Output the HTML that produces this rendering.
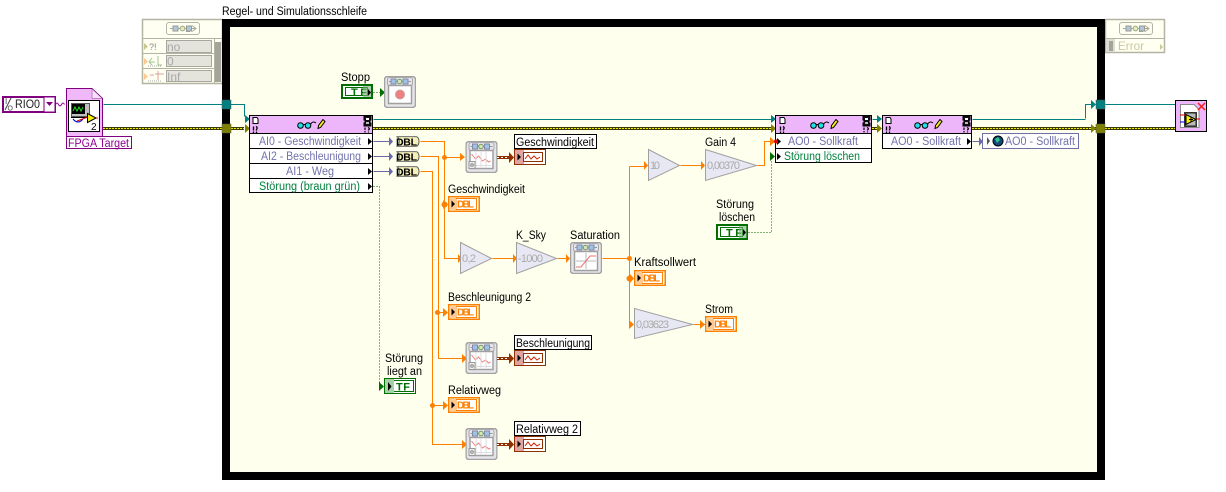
<!DOCTYPE html>
<html><head><meta charset="utf-8"><title>Regel- und Simulationsschleife</title>
<style>
html,body{margin:0;padding:0;background:#fff;width:1226px;height:492px;overflow:hidden}
svg{display:block}
text{font-family:"Liberation Sans",sans-serif;font-size:11.5px;fill:#000;white-space:pre}
.n{fill:#7272ac}.g{fill:#00803c}.gr{fill:#aaa;font-size:11px}.p{fill:#900090}
.d{font-weight:bold;font-size:10px;fill:#ff8000}
.c{font-weight:bold;font-size:10.500px;fill:#000}
.w{fill:none;shape-rendering:crispEdges}
.or{stroke:#ff8000}.te{stroke:#008080}.bl{stroke:#6a6aa6}.gn{stroke:#006800;stroke-dasharray:1 2}
</style></head><body>
<svg width="1226" height="492" viewBox="0 0 1226 492" xmlns="http://www.w3.org/2000/svg">
<defs>
<symbol id="hdr" viewBox="0 0 34 13" overflow="visible">
<rect x=".5" y=".5" width="33" height="12" rx="2.500" fill="none" stroke="#b4b4a4"/>
<path d="M4 6.500H30M26 3.500L30 6.500 26 9.500M20 9.500H24" stroke="#a8a898" fill="none"/>
<rect x="7" y="4" width="5" height="5" fill="#b0c8dc" stroke="#9a9a90"/>
<circle cx="16.500" cy="6.500" r="2.400" fill="#e0ecc8" stroke="#a0a880"/>
<rect x="20.500" y="4" width="5" height="5" fill="#b0c8dc" stroke="#9a9a90"/>
</symbol>
<symbol id="top" viewBox="0 0 32 10" overflow="visible">
<rect x="3.500" y=".5" width="25" height="8" rx="2" fill="none" stroke="#a8a8a8"/>
<path d="M5 4.500H27" stroke="#999" fill="none"/>
<rect x="7" y="2" width="5" height="5" fill="#9cc4e4" stroke="#88a"/>
<circle cx="15.500" cy="4.500" r="2.300" fill="#cfe8b8" stroke="#7a9a60"/>
<rect x="19" y="2" width="5" height="5" fill="#9cc4e4" stroke="#88a"/>
</symbol>
<symbol id="graph" viewBox="0 0 32 32">
<rect x=".5" y=".5" width="31" height="31" rx="3" fill="#e6e6ea" stroke="#a2a2a2" stroke-width="1.500"/>
<use href="#top" width="32" height="10" y="1"/>
<rect x="4.500" y="9.500" width="23" height="18" fill="#fff" stroke="#a0a0a0" stroke-width="1.500"/>
<path d="M6 13l4 5 3-3 4 5 3-2 3 3 2-1" fill="none" stroke="#f08080"/>
<path d="M6 24.500H26M10.500 10V26M15.500 10V26M20.500 10V26" stroke="#ddd" fill="none"/>
<rect x="3.500" y="20.500" width="6" height="7" fill="#eee" stroke="#999"/>
<circle cx="6.500" cy="24" r="1.300" fill="none" stroke="#888"/>
</symbol>
<symbol id="sat" viewBox="0 0 32 32">
<rect x=".5" y=".5" width="31" height="31" rx="3" fill="#e6e6ea" stroke="#a2a2a2" stroke-width="1.500"/>
<use href="#top" width="32" height="10" y="1"/>
<rect x="4.500" y="9.500" width="23" height="19" fill="#fff" stroke="#a0a0a0" stroke-width="1.500"/>
<path d="M6 19H26M16 11V27" stroke="#bbb" fill="none"/>
<path d="M6 25H11L20 14H26" stroke="#f07070" fill="none"/>
</symbol>
<symbol id="stop" viewBox="0 0 32 32">
<rect x=".5" y=".5" width="31" height="31" rx="3" fill="#e6e6ea" stroke="#a2a2a2" stroke-width="1.500"/>
<use href="#top" width="32" height="10" y="1"/>
<rect x="4.500" y="9.500" width="23" height="18" fill="#fff" stroke="#a0a0a0" stroke-width="1.500"/>
<circle cx="16" cy="18.500" r="4.500" fill="#f08080" stroke="#c8a0a0"/>
</symbol>
<symbol id="wave" viewBox="0 0 32 16">
<rect x=".5" y=".5" width="31" height="15" fill="#fff" stroke="#8e3000"/>
<rect x="1" y="1" width="9" height="14" fill="#e0a4a0"/>
<rect x="9.500" y="3.500" width="19" height="9" fill="#fff" stroke="#8e3000"/>
<path d="M3.500 4.500L7 8 3.500 11.500Z" fill="#000"/>
<path d="M11 10L14 6 17 10 20 7 23 10 26 8" fill="none" stroke="#d02000"/>
</symbol>
<symbol id="dbli" viewBox="0 0 32 16">
<rect x=".75" y=".75" width="30.500" height="14.500" fill="#fffff0" stroke="#ff8000" stroke-width="1.500"/>
<rect x="2" y="2" width="8" height="12" fill="#ffd0a0"/>
<rect x="8.500" y="2.500" width="20" height="11" fill="#fff" stroke="#ff8000"/>
<rect x="3" y="3" width="6" height="10" fill="#ffc890"/>
<path d="M3.500 4.500L7 8 3.500 11.500Z" fill="#000"/>
</symbol>
<symbol id="dblc" viewBox="0 0 28 11">
<path d="M3.500.5H24a3 5 0 0 1 0 10H3.500a3 5 0 0 0 0-10Z" fill="#f4eeb8" stroke="#555" stroke-width="1"/>
</symbol>
<symbol id="node" viewBox="0 0 14 18">
<path d="M2 1.500H6L7 3V7.500H2Z" fill="#fff" stroke="#000"/>
<path d="M2.500 10.500V14.500M2.500 15.500V17M5 10.500Q7 11.500 5.500 13.500V14.500M5.500 15.500V17" stroke="#000" fill="none" stroke-width="1.300"/>
</symbol>
<symbol id="glass" viewBox="0 0 30 14">
<circle cx="4.500" cy="6.500" r="2.800" fill="#20e0e8" stroke="#000"/>
<circle cx="12" cy="6.500" r="2.800" fill="#20e0e8" stroke="#000"/>
<path d="M7 5.500H9.500M14.500 5.500C16 2.500 18 2.500 20 4" fill="none" stroke="#000"/>
<path d="M22 9.500L22.500 6.500 27 .5 29 2.500 24.500 8.500Z" fill="#f8f020" stroke="#000"/>
</symbol>
<symbol id="err" viewBox="0 0 9 18">
<path d="M1 1H8V5H7V8H8V11H1V8H2V5H1Z" fill="#111" stroke="#000"/>
<rect x="3" y="3" width="3" height="2" fill="#fff"/><rect x="3" y="7" width="3" height="2" fill="#bbb"/>
<path d="M2 12.500V15M2 16V17.500M5 12.500Q7.500 13.500 5.500 15V15.500M5.500 16.500V17.500" stroke="#000" stroke-width="1.200" fill="none"/>
</symbol>
</defs>

<text x="222" y="15" textLength="145" lengthAdjust="spacingAndGlyphs">Regel- und Simulationsschleife</text>

<!-- left shift register -->
<rect x="142.500" y="19.500" width="80" height="64" fill="#fffff2" stroke="#b4b4a4" stroke-width="1.500"/>
<path d="M143 38.500H222M143 53.500H215M143 68.500H215M214.500 38V84" stroke="#b4b4a4" class="w"/>
<use href="#hdr" x="166" y="22" width="34" height="13"/>
<rect x="166.500" y="40.500" width="45" height="12" fill="#e4e4dc" stroke="#a8a8a0"/>
<rect x="166.500" y="55.500" width="45" height="11" fill="#e4e4dc" stroke="#a8a8a0"/>
<rect x="166.500" y="70.500" width="45" height="11" fill="#e4e4dc" stroke="#a8a8a0"/>
<rect x="215" y="42" width="6" height="40" fill="#a4a498"/>
<path d="M144 43L148 46.500 144 50Z" fill="#c8c890"/><path d="M144 58L148 61.500 144 65Z" fill="#ffc890"/><path d="M144 73L148 76.500 144 80Z" fill="#ffc890"/>
<text x="149" y="50" style="font-size:9px;fill:#888">?!</text>
<path d="M150 62H155M152 58L149 62 152 65M158 56V65H162" fill="none" stroke="#a0c898"/>
<path d="M150 75H154M158 71V80M155 74H164" fill="none" stroke="#d8a0a0"/>
<path d="M148 66H162M148 81H162" stroke="#aaa" stroke-dasharray="1 1"/>
<text x="167" y="51" style="font-size:12px;fill:#a8a8a8">no</text>
<text x="167" y="65.500" style="font-size:12px;fill:#a8a8a8">0</text>
<text x="167" y="81" style="font-size:12px;fill:#a8a8a8">Inf</text>

<!-- right shift register -->
<rect x="1105.500" y="19.500" width="59" height="33" fill="#fffff2" stroke="#b4b4a4" stroke-width="1.500"/>
<path d="M1106 38.500H1165" stroke="#b4b4a4" class="w"/>
<use href="#hdr" x="1119" y="22" width="34" height="13"/>
<rect x="1106" y="39" width="9" height="13" fill="#dcdcd0"/><rect x="1109" y="41" width="4" height="10" fill="#a4a498"/>
<text x="1118" y="50" textLength="26" lengthAdjust="spacingAndGlyphs" style="fill:#c8c8a0">Error</text>
<path d="M1160 44L1163 47 1160 50Z" fill="#c8c890"/>

<!-- loop -->
<rect x="226" y="23" width="875" height="453" fill="#ffffee" stroke="#000" stroke-width="8" shape-rendering="crispEdges"/>

<!-- outer wires -->
<g transform="translate(.5 .5)">
<path class="w te" d="M103 104H244V116M1085 118V104H1093M972 119H1085M1105 104H1175M373 119H772M872 119H878"/>
<path class="w bl" d="M373 141H390M373 156H390M373 171H390M972 141H980"/>
<path class="w or" d="M420 141H444V258H458M420 156H438V358H463M420 171H432V444H463M444 157H462M444 204H445M437 312H445M432 405H445"/>
<path class="w or" d="M492 258H513M557 258H567M602 258H629M629 166V324H631M629 166H645M680 165H702M757 165H764V141H771M693 324H705"/>
<path class="w or" d="M630 278H632"/>
<path class="w gn" d="M373 92H381M373 186H379V386H381M748 232H771V160"/>
<path d="M55 104q1.500-3 3 0t3 0 3 0" fill="none" stroke="#900090"/>
</g>
<g class="w">
<path d="M103 128.500H222M231 128.500H244M373 128.500H772M872 128.500H878M972 128.500H1096M1105 128.500H1175" stroke="#3a3a00" stroke-width="3"/>
<path d="M103 128.500H222M231 128.500H244M373 128.500H772M872 128.500H878M972 128.500H1096M1105 128.500H1175" stroke="#f4f000" stroke-width="1" stroke-dasharray="2 1"/>
</g>
<!-- tunnels -->
<rect x="222" y="100" width="9" height="9" fill="#008080" stroke="#555" stroke-width=".5"/>
<rect x="222" y="124" width="9" height="9" fill="#808000" stroke="#555" stroke-width=".5"/>
<rect x="1096" y="100" width="9" height="9" fill="#008080" stroke="#555" stroke-width=".5"/>
<rect x="1096" y="124" width="9" height="9" fill="#808000" stroke="#555" stroke-width=".5"/>

<!-- arrows -->
<g fill="#ff8000">
<path d="M458 254l4 4.500-4 4.500zM513 254l4 4.500-4 4.500zM566 254l4 4.500-4 4.500zM460 153l5 4-5 4zM462 354l5 4.500-5 4.500zM462 440l5 4.500-5 4.500zM644 161l4 4.500-4 4.500zM701 161l4 4.500-4 4.500zM770 137l5 4.500-5 4.500zM629 320l5 4.500-5 4.500zM443 200l5 4.500-5 4.500zM443 308l5 4.500-5 4.500zM443 401l5 4.500-5 4.500zM630 274l4 4.500-4 4.500zM700 320l5 4.500-5 4.500z"/>
<circle cx="444.500" cy="157.500" r="2.500"/><circle cx="444.500" cy="204.500" r="3"/><circle cx="437.500" cy="312.500" r="2.500"/><circle cx="432.500" cy="405.500" r="2.500"/><circle cx="629.500" cy="258.500" r="2.500"/><circle cx="629.500" cy="278.500" r="3"/>
</g>
<g fill="#006f00"><path d="M380 88l5 4.500-5 4.500zM379 382l5 4.500-5 4.500zM770 152l5 4.500-5 4.500z"/></g>
<g fill="#008080"><path d="M245 115l5 4-5 4zM771 115l5 4-5 4zM877 115l5 4-5 4zM1091 100l5 4.500-5 4.500z"/></g>
<g fill="#808000"><path d="M245 124l5 4.500-5 4.500zM771 124l5 4.500-5 4.500zM877 124l5 4.500-5 4.500zM1091 124l5 4.500-5 4.500z"/></g>
<g fill="#6a6aa6"><path d="M389 137l4 4.500-4 4.500zM389 152l4 4.500-4 4.500zM389 167l4 4.500-4 4.500zM979 137l4 4.500-4 4.500z"/></g>

<!-- RIO0 -->
<rect x="3" y="97" width="52" height="15" fill="#fff" stroke="#800080" stroke-width="2"/>
<rect x="44" y="97" width="11" height="15" fill="#fff" stroke="#800080" stroke-width="1"/>
<path d="M46 102H53L49.500 106Z" fill="#800080"/>
<text x="5" y="104" style="font-size:8px;fill:#444">I</text><path d="M5 110L11 98" stroke="#444" fill="none"/><text x="7.500" y="110.500" style="font-size:7px;fill:#444">O</text>
<text x="15" y="108" textLength="25" lengthAdjust="spacingAndGlyphs" style="font-size:12px;fill:#222">RIO0</text>

<!-- FPGA -->
<path d="M66.500 88.500H92L102.500 98.500V136.500H66.500Z" fill="#f0b8f8" stroke="#800080"/>
<path d="M92 89V98.500H102" fill="#f8e0fc" stroke="#c080c0"/>
<rect x="68.500" y="100.500" width="31" height="31" fill="#fff" stroke="#000"/>
<rect x="71.500" y="103.500" width="18" height="13" fill="#c0c0c0" stroke="#555"/>
<rect x="72" y="104" width="13" height="10" fill="#000"/>
<path d="M73 111l2-4 2 4 2-4 2 4 2-4" stroke="#20e020" fill="none"/>
<path d="M71 117.500H88" stroke="#000"/>
<path d="M73 119q5 6 10 0" stroke="#0000c0" fill="none"/><path d="M77 121L88 117" stroke="#e00000"/>
<path d="M87.500 113.500L96 118 87.500 122.500Z" fill="#f8f000" stroke="#000"/>
<path d="M96 118H98" stroke="#e00000"/>
<text x="91" y="130" style="font-size:10px">2</text>
<rect x="66.500" y="136.500" width="65" height="12" fill="#fff" stroke="#800080"/>
<text x="68" y="147" textLength="61" lengthAdjust="spacingAndGlyphs" class="p">FPGA Target</text>

<!-- Node 1 -->
<rect x="249.500" y="115.500" width="123" height="77" fill="#fff" stroke="#000"/>
<rect x="250" y="116" width="122" height="17" fill="#edb6fa"/>
<path d="M250 133.500H373M250 148.500H373M250 163.500H373M250 178.500H373" stroke="#000" class="w"/>
<use href="#node" x="251" y="116" width="14" height="18"/>
<use href="#glass" x="296" y="119" width="30" height="14"/>
<use href="#err" x="363" y="115" width="9" height="18"/>
<text x="259" y="145" textLength="102" lengthAdjust="spacingAndGlyphs" class="n">AI0 - Geschwindigkeit</text>
<text x="261" y="160" textLength="100" lengthAdjust="spacingAndGlyphs" class="n">AI2 - Beschleunigung</text>
<text x="286" y="175" textLength="48" lengthAdjust="spacingAndGlyphs" class="n">AI1 - Weg</text>
<text x="259" y="190" textLength="101" lengthAdjust="spacingAndGlyphs" class="g">Störung (braun grün)</text>
<path d="M368 138l4 3.500-4 3.500zM368 153l4 3.500-4 3.500zM368 168l4 3.500-4 3.500zM368 183l4 3.500-4 3.500z" fill="#000"/>

<!-- Node 2 -->
<rect x="775.500" y="115.500" width="96" height="47" fill="#fff" stroke="#000"/>
<rect x="776" y="116" width="95" height="17" fill="#edb6fa"/>
<path d="M776 133.500H872M776 148.500H872" stroke="#000" class="w"/>
<use href="#node" x="778" y="116" width="14" height="18"/>
<use href="#glass" x="809" y="119" width="30" height="14"/>
<use href="#err" x="862" y="115" width="9" height="18"/>
<text x="788" y="145" textLength="70" lengthAdjust="spacingAndGlyphs" class="n">AO0 - Sollkraft</text>
<text x="784" y="160" textLength="76" lengthAdjust="spacingAndGlyphs" class="g">Störung löschen</text>
<path d="M777 138l4 3.500-4 3.500zM777 153l4 3.500-4 3.500z" fill="#000"/><circle cx="776" cy="141.500" r="2" fill="#e00000"/>

<!-- Node 3 -->
<rect x="882.500" y="115.500" width="89" height="33" fill="#fff" stroke="#000"/>
<rect x="883" y="116" width="88" height="17" fill="#edb6fa"/>
<path d="M883 133.500H972" stroke="#000" class="w"/>
<use href="#node" x="884" y="116" width="14" height="18"/>
<use href="#glass" x="913" y="119" width="30" height="14"/>
<use href="#err" x="962" y="115" width="9" height="18"/>
<text x="891" y="145" textLength="70" lengthAdjust="spacingAndGlyphs" class="n">AO0 - Sollkraft</text>
<path d="M967 138l4 3.500-4 3.500z" fill="#000"/>

<!-- AO0 indicator -->
<rect x="982.500" y="133.500" width="96" height="15" fill="#fff" stroke="#7070a8"/>
<path d="M987 137l3 4-3 4z" fill="#555"/>
<circle cx="998" cy="141" r="5" fill="#104878" stroke="#000"/>
<path d="M995 139l3-2 2 3-3 3z" fill="#30c090"/>
<text x="1005" y="145" textLength="70" lengthAdjust="spacingAndGlyphs" class="n">AO0 - Sollkraft</text>

<!-- end node -->
<rect x="1175.500" y="100.500" width="31" height="31" fill="#edb6fa" stroke="#000"/>
<path d="M1180.500 104.500H1194L1199 109.500V127.500H1180.500Z" fill="#fff" stroke="#888"/>
<rect x="1184" y="112" width="13" height="15" fill="#444"/>
<rect x="1185" y="113" width="11" height="13" fill="#bbb" stroke="#222"/>
<path d="M1186 114.500L1196 119.500 1186 124.500Z" fill="#f8f000" stroke="#000"/>
<path d="M1189 119.500H1193M1191 117.500V121.500" stroke="#000"/>
<path d="M1180 115H1186" stroke="#e00000"/><path d="M1180 122H1186" stroke="#0000e0"/><path d="M1196 119H1200" stroke="#e00000"/>
<path d="M1198 103L1205 110M1205 103L1198 110" stroke="#f02020" stroke-width="1.500"/>

<!-- Stopp -->
<text x="341" y="81" textLength="29" lengthAdjust="spacingAndGlyphs">Stopp</text>
<rect x="342" y="85" width="30" height="13" fill="#fff" stroke="#006f00" stroke-width="2"/>
<rect x="345.500" y="87.500" width="22" height="8" fill="#fff" stroke="#006f00"/>
<text x="351" y="96" textLength="16" style="font-weight:bold;font-size:11px;fill:#006f00">TF</text>
<rect x="363" y="86" width="8" height="11" fill="#78b078" opacity=".6"/>
<path d="M368 89l3 3.500-3 3.500z" fill="#000"/>
<use href="#stop" x="384" y="76" width="32" height="32"/>

<!-- DBL constants -->
<g>
<use href="#dblc" x="393" y="136" width="27" height="11"/>
<use href="#dblc" x="393" y="151" width="27" height="11"/>
<use href="#dblc" x="393" y="166" width="27" height="11"/>
<text x="396" y="145.500" textLength="21" class="c">DBL</text>
<text x="396" y="160.500" textLength="21" class="c">DBL</text>
<text x="396" y="175.500" textLength="21" class="c">DBL</text>
</g>

<!-- graph 1 -->
<use href="#graph" x="465.500" y="141" width="32" height="32"/>
<rect x="497" y="156" width="14" height="3" fill="#8e3000"/><path d="M497 157.500H511" stroke="#fff" stroke-dasharray="2 2"/>
<path d="M509 152l5 5.500-5 5.500z" fill="#8e3000"/>
<use href="#wave" x="514" y="149" width="32" height="16"/>
<rect x="514.500" y="134.500" width="82" height="14" fill="#fff" stroke="#000"/>
<text x="516" y="146" textLength="78" lengthAdjust="spacingAndGlyphs">Geschwindigkeit</text>

<text x="448" y="193" textLength="77" lengthAdjust="spacingAndGlyphs">Geschwindigkeit</text>
<use href="#dbli" x="448" y="196" width="32" height="16"/>
<text x="457" y="207.500" textLength="17" class="d">DBL</text>

<!-- gains -->
<path d="M460.500 242.500L491.500 258.500 460.500 273.500Z" fill="#e8e8f4" stroke="#a0a0a0"/>
<text x="462" y="262" textLength="14" class="gr">0,2</text>
<text x="516" y="239" textLength="30" lengthAdjust="spacingAndGlyphs">K_Sky</text>
<path d="M516.500 242.500L556.500 258.500 516.500 273.500Z" fill="#e8e8f4" stroke="#a0a0a0"/>
<text x="518" y="262" textLength="25" class="gr">-1000</text>
<text x="570" y="239" textLength="50" lengthAdjust="spacingAndGlyphs">Saturation</text>
<use href="#sat" x="570" y="242" width="32" height="32"/>

<text x="448" y="301" textLength="83" lengthAdjust="spacingAndGlyphs">Beschleunigung 2</text>
<use href="#dbli" x="448" y="304" width="32" height="16"/>
<text x="457" y="315.500" textLength="17" class="d">DBL</text>

<!-- graph 2 -->
<use href="#graph" x="465.500" y="342" width="32" height="32"/>
<rect x="497" y="357" width="14" height="3" fill="#8e3000"/><path d="M497 358.500H511" stroke="#fff" stroke-dasharray="2 2"/>
<path d="M509 353l5 5.500-5 5.500z" fill="#8e3000"/>
<use href="#wave" x="514" y="350" width="32" height="16"/>
<rect x="514.500" y="335.500" width="77" height="14" fill="#fff" stroke="#000"/>
<text x="516" y="347" textLength="74" lengthAdjust="spacingAndGlyphs">Beschleunigung</text>

<text x="385" y="362" textLength="38" lengthAdjust="spacingAndGlyphs">Störung</text>
<text x="387" y="375" textLength="35" lengthAdjust="spacingAndGlyphs">liegt an</text>
<rect x="384.500" y="378.500" width="31" height="15" fill="#fff" stroke="#006f00"/>
<rect x="392.500" y="380.500" width="21" height="11" fill="none" stroke="#006f00"/>
<rect x="385" y="379" width="9" height="14" fill="#a8d0a8"/>
<path d="M388 382l3.500 4.500-3.500 4.500z" fill="#000"/>
<text x="396" y="390.500" textLength="14" style="font-weight:bold;font-size:11px;fill:#006f00">TF</text>

<text x="448" y="394" textLength="53" lengthAdjust="spacingAndGlyphs">Relativweg</text>
<use href="#dbli" x="448" y="397" width="32" height="16"/>
<text x="457" y="408.500" textLength="17" class="d">DBL</text>

<!-- graph 3 -->
<use href="#graph" x="465.500" y="428" width="32" height="32"/>
<rect x="497" y="443" width="14" height="3" fill="#8e3000"/><path d="M497 444.500H511" stroke="#fff" stroke-dasharray="2 2"/>
<path d="M509 439l5 5.500-5 5.500z" fill="#8e3000"/>
<use href="#wave" x="514" y="436" width="32" height="16"/>
<rect x="514.500" y="421.500" width="66" height="14" fill="#fff" stroke="#000"/>
<text x="516" y="433" textLength="62" lengthAdjust="spacingAndGlyphs">Relativweg 2</text>

<!-- Kraft -->
<text x="634" y="266" textLength="62" lengthAdjust="spacingAndGlyphs">Kraftsollwert</text>
<use href="#dbli" x="634" y="270" width="32" height="16"/>
<text x="643" y="281.500" textLength="17" class="d">DBL</text>
<path d="M634.500 308.500L692.500 324.500 634.500 338.500Z" fill="#e8e8f4" stroke="#a0a0a0"/>
<text x="636" y="328" textLength="33" class="gr">0,03623</text>
<text x="705" y="313" textLength="28" lengthAdjust="spacingAndGlyphs">Strom</text>
<use href="#dbli" x="705" y="316" width="32" height="16"/>
<text x="714" y="327.500" textLength="17" class="d">DBL</text>

<!-- gain 10 / 4 -->
<path d="M648.500 149.500L679.500 165.500 648.500 180.500Z" fill="#e8e8f4" stroke="#a0a0a0"/>
<text x="650" y="169" textLength="10" class="gr">10</text>
<text x="705" y="146" textLength="31" lengthAdjust="spacingAndGlyphs">Gain 4</text>
<path d="M705.500 149.500L756.500 165.500 705.500 180.500Z" fill="#e8e8f4" stroke="#a0a0a0"/>
<text x="707" y="169" textLength="33" class="gr">0,00370</text>

<text x="716" y="208" textLength="38" lengthAdjust="spacingAndGlyphs">Störung</text>
<text x="719" y="221" textLength="36" lengthAdjust="spacingAndGlyphs">löschen</text>
<rect x="717" y="225" width="30" height="14" fill="#fff" stroke="#006f00" stroke-width="2"/>
<rect x="720.500" y="227.500" width="22" height="9" fill="#fff" stroke="#006f00"/>
<text x="726" y="236.500" textLength="16" style="font-weight:bold;font-size:11px;fill:#006f00">TF</text>
<rect x="739" y="226" width="8" height="12" fill="#78b078" opacity=".6"/>
<path d="M743 229l3 3.500-3 3.500z" fill="#000"/>
</svg>
</body></html>
